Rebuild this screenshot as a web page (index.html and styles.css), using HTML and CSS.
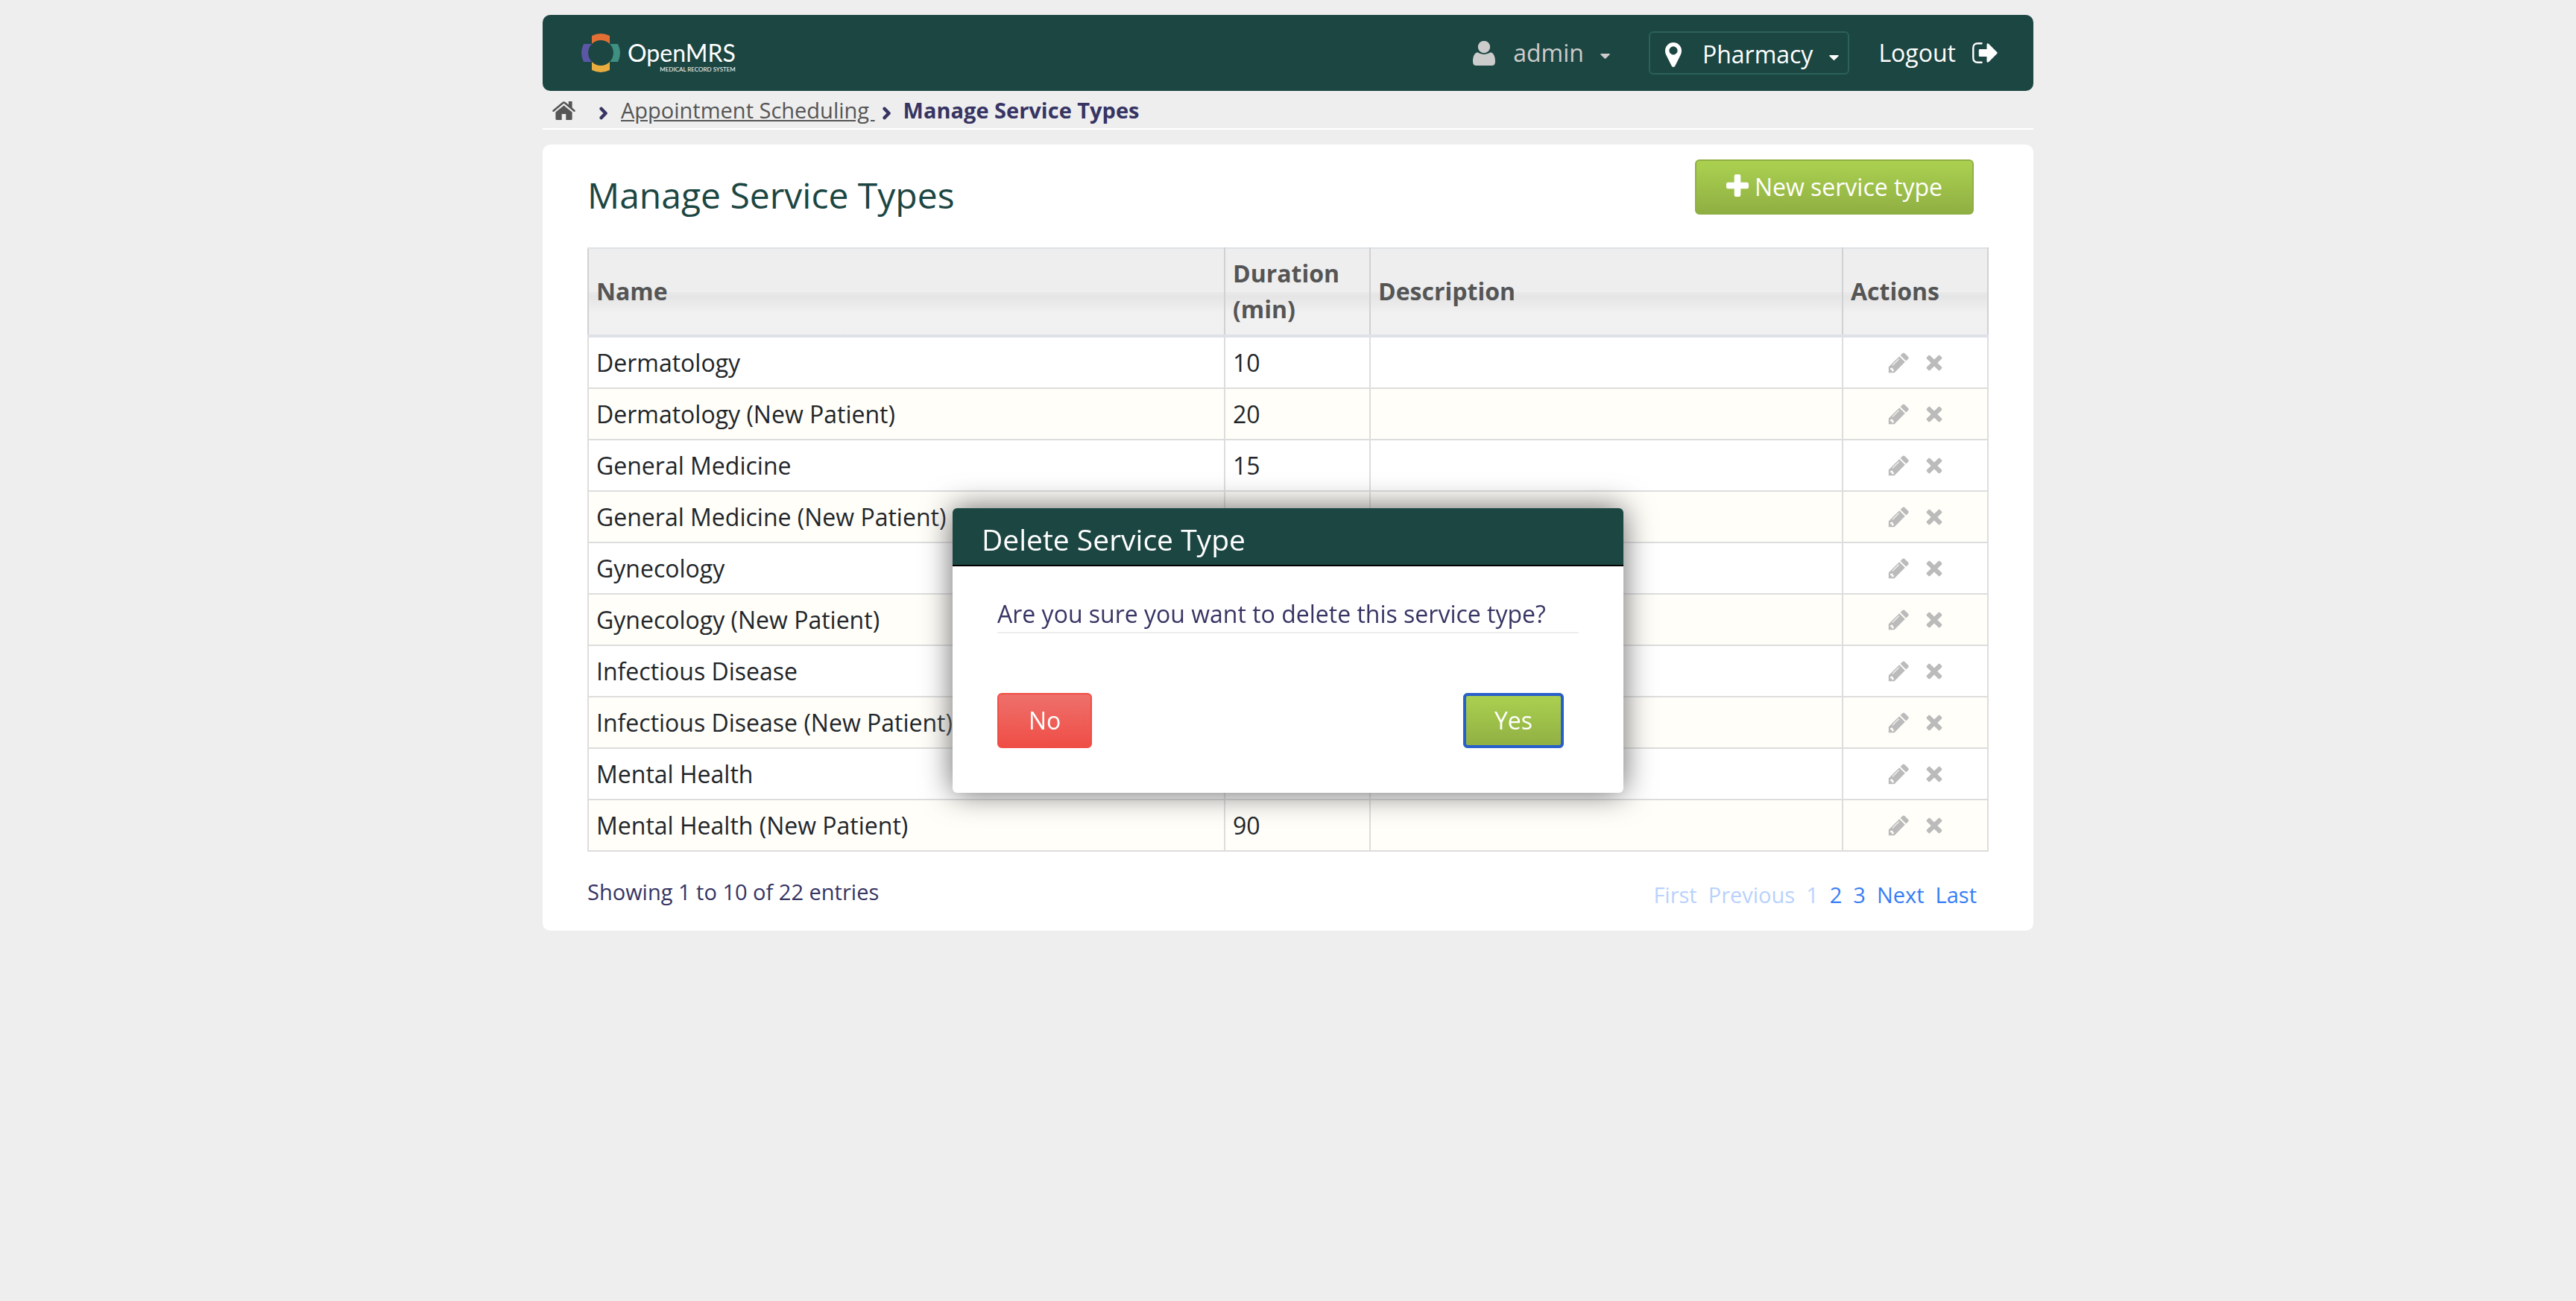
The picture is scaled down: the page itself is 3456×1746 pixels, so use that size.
FILE: index.html
```html
<!DOCTYPE html>
<html lang="en">
<head>
<meta charset="utf-8">
<meta name="viewport" content="width=device-width, initial-scale=1">
<title>Manage Service Types</title>
<link rel="stylesheet" href="styles.css">
</head>
<body>
<svg class="symbols" aria-hidden="true">
  <symbol id="caret" viewBox="0 0 13 7"><path d="M.8 0H12.200Q13.200.6 12.400 1.400L7.300 6.600Q6.500 7.200 5.700 6.600L.6 1.400Q-.2.6.8 0Z"/></symbol>
  <symbol id="chevron" viewBox="0 0 12 18"><path d="M2.700 3 8.500 9 2.700 15" fill="none" stroke="currentColor" stroke-width="4.600" stroke-linejoin="round" stroke-linecap="round"/></symbol>
  <symbol id="pencil" viewBox="0 0 28 28">
    <path fill-rule="evenodd" d="M15.200 5.200 22.800 12.800 8.500 27.200H.8V19.500ZM14.300 8.200 5.600 16.900 6.400 17.700 15.100 9ZM3.200 21.200 2.800 22.800 4.800 23.600 5.400 25.500 7.600 25 8.100 23.400 6.600 22.900 6.500 21 4.800 20.600Z"/>
    <path d="M16.600 3.900 19.400 1.100Q20.800-.2 22.300 1L27.100 5.800Q28.300 7.200 27.100 8.700L24.200 11.500Z"/>
  </symbol>
  <symbol id="remove" viewBox="0 0 22 22"><path d="M5.300.9Q4.300.2 3.400 1L.9 3.500Q.2 4.500 1 5.400L6.700 11 1 16.600Q.2 17.500.9 18.500L3.400 21Q4.300 21.800 5.300 21.100L11 15.400 16.700 21.100Q17.700 21.800 18.600 21L21.100 18.500Q21.800 17.500 21 16.600L15.300 11 21 5.400Q21.800 4.500 21.100 3.500L18.600 1Q17.700.2 16.700.9L11 6.600Z"/></symbol>
</svg>

<div class="page">
  <header class="topbar">
    <a class="logo" href="#" aria-label="OpenMRS home">
      <svg class="logo-mark" viewBox="0 0 52 52" aria-hidden="true">
        <path fill="#e36f35" d="M14 3Q26-3 38 3V14A17 17 0 0 0 14 14Z"/>
        <path fill="#5b57a6" d="M3 14Q-3 26 3 38H14A17 17 0 0 1 14 14Z"/>
        <path fill="#3f9080" d="M49 14Q55 26 49 38H38A17 17 0 0 0 38 14Z"/>
        <path fill="#e9ad3f" d="M14 49Q26 55 38 49V38A17 17 0 0 1 14 38Z"/>
      </svg>
      <span class="wordmark"><span class="wordmark-name">OpenMRS</span><span class="wordmark-tag">MEDICAL RECORD SYSTEM</span></span>
    </a>
    <nav class="user-nav" aria-label="User">
      <button class="account" type="button">
        <svg class="icon-user" viewBox="0 0 30 33" aria-hidden="true"><circle cx="15" cy="8" r="8.200"/><path d="M6.200 15.300Q15 20.700 23.800 15.300C28 16 30 21 30 27.500Q30 33 25.500 33H4.500Q0 33 0 27.500C0 21 2 16 6.200 15.300Z"/></svg>
        <span>admin</span>
        <svg class="icon-caret" aria-hidden="true"><use href="#caret"/></svg>
      </button>
      <button class="location" type="button">
        <svg class="icon-pin" viewBox="0 0 22 33" aria-hidden="true"><path fill-rule="evenodd" d="M11 0A11 11 0 0 1 22 11C22 13.500 21.500 15 20.700 16.700L13.300 31.500Q11 34.500 8.700 31.500L1.300 16.700C.5 15 0 13.500 0 11A11 11 0 0 1 11 0ZM11 5.300A5.600 5.600 0 0 0 11 16.500 5.600 5.600 0 0 0 11 5.300Z"/></svg>
        <span>Pharmacy</span>
        <svg class="icon-caret" aria-hidden="true"><use href="#caret"/></svg>
      </button>
      <a class="logout" href="#">
        <span>Logout</span>
        <svg class="icon-logout" viewBox="0 0 34 28" aria-hidden="true"><path d="M13.500 1.200H7.500Q1.300 1.200 1.300 7.400V20.600Q1.300 26.800 7.500 26.800H13.500" fill="none" stroke="currentColor" stroke-width="2.400"/><path d="M10 9H19.500V2.600Q20 .4 22 1.700L33.200 12.900Q34.300 14 33.200 15.100L22 26.300Q20 27.600 19.500 25.400V19H10Q8.800 19 8.800 17.800V10.200Q8.800 9 10 9Z"/></svg>
      </a>
    </nav>
  </header>

  <nav class="breadcrumbs" aria-label="Breadcrumb">
    <a class="home" href="#" aria-label="Home">
      <svg class="icon-home" viewBox="0 0 31 25" aria-hidden="true"><path d="M1.500 12.700 14.300 2Q15.500 1.200 16.700 2L29.500 12.700" fill="none" stroke="currentColor" stroke-width="2.600" stroke-linecap="round"/><path d="M21.800 0H26.600V10L21.800 6ZM15.500 5.500 26.600 14.600V23.500Q26.600 25 25.100 25H18.300V17H12.700V25H6Q4.400 25 4.400 23.500V14.600Z"/></svg>
    </a>
    <svg class="icon-chevron" aria-hidden="true"><use href="#chevron"/></svg>
    <a class="crumb" href="#">Appointment Scheduling </a>
    <svg class="icon-chevron" aria-hidden="true"><use href="#chevron"/></svg>
    <strong>Manage Service Types</strong>
  </nav>

  <main class="content">
    <div class="title-row">
      <h1>Manage Service Types</h1>
      <button class="btn confirm" type="button"><svg class="icon-plus" viewBox="0 0 30 30" aria-hidden="true"><path d="M13 0H17Q19.300 0 19.300 2.300V10.700H27.700Q30 10.700 30 13V17Q30 19.300 27.700 19.300H19.300V27.700Q19.300 30 17 30H13Q10.700 30 10.700 27.700V19.300H2.300Q0 19.300 0 17V13Q0 10.700 2.300 10.700H10.700V2.300Q10.700 0 13 0Z"/></svg>New service type</button>
    </div>

    <table class="services">
      <colgroup><col><col class="col-duration"><col class="col-description"><col class="col-actions"></colgroup>
      <thead>
        <tr><th scope="col">Name</th><th scope="col">Duration (min)</th><th scope="col">Description</th><th scope="col">Actions</th></tr>
      </thead>
      <tbody>
        <tr><td>Dermatology</td><td>10</td><td></td><td><div class="actions"><button type="button" aria-label="Edit"><svg class="icon-pencil"><use href="#pencil"/></svg></button><button type="button" aria-label="Delete"><svg class="icon-remove"><use href="#remove"/></svg></button></div></td></tr>
        <tr><td>Dermatology (New Patient)</td><td>20</td><td></td><td><div class="actions"><button type="button" aria-label="Edit"><svg class="icon-pencil"><use href="#pencil"/></svg></button><button type="button" aria-label="Delete"><svg class="icon-remove"><use href="#remove"/></svg></button></div></td></tr>
        <tr><td>General Medicine</td><td>15</td><td></td><td><div class="actions"><button type="button" aria-label="Edit"><svg class="icon-pencil"><use href="#pencil"/></svg></button><button type="button" aria-label="Delete"><svg class="icon-remove"><use href="#remove"/></svg></button></div></td></tr>
        <tr><td>General Medicine (New Patient)</td><td></td><td></td><td><div class="actions"><button type="button" aria-label="Edit"><svg class="icon-pencil"><use href="#pencil"/></svg></button><button type="button" aria-label="Delete"><svg class="icon-remove"><use href="#remove"/></svg></button></div></td></tr>
        <tr><td>Gynecology</td><td></td><td></td><td><div class="actions"><button type="button" aria-label="Edit"><svg class="icon-pencil"><use href="#pencil"/></svg></button><button type="button" aria-label="Delete"><svg class="icon-remove"><use href="#remove"/></svg></button></div></td></tr>
        <tr><td>Gynecology (New Patient)</td><td></td><td></td><td><div class="actions"><button type="button" aria-label="Edit"><svg class="icon-pencil"><use href="#pencil"/></svg></button><button type="button" aria-label="Delete"><svg class="icon-remove"><use href="#remove"/></svg></button></div></td></tr>
        <tr><td>Infectious Disease</td><td></td><td></td><td><div class="actions"><button type="button" aria-label="Edit"><svg class="icon-pencil"><use href="#pencil"/></svg></button><button type="button" aria-label="Delete"><svg class="icon-remove"><use href="#remove"/></svg></button></div></td></tr>
        <tr><td>Infectious Disease (New Patient)</td><td></td><td></td><td><div class="actions"><button type="button" aria-label="Edit"><svg class="icon-pencil"><use href="#pencil"/></svg></button><button type="button" aria-label="Delete"><svg class="icon-remove"><use href="#remove"/></svg></button></div></td></tr>
        <tr><td>Mental Health</td><td></td><td></td><td><div class="actions"><button type="button" aria-label="Edit"><svg class="icon-pencil"><use href="#pencil"/></svg></button><button type="button" aria-label="Delete"><svg class="icon-remove"><use href="#remove"/></svg></button></div></td></tr>
        <tr><td>Mental Health (New Patient)</td><td>90</td><td></td><td><div class="actions"><button type="button" aria-label="Edit"><svg class="icon-pencil"><use href="#pencil"/></svg></button><button type="button" aria-label="Delete"><svg class="icon-remove"><use href="#remove"/></svg></button></div></td></tr>
      </tbody>
    </table>

    <div class="table-footer">
      <p>Showing 1 to 10 of 22 entries</p>
      <nav class="pagination" aria-label="Pages">
        <a class="disabled" href="#">First</a>
        <a class="disabled" href="#">Previous</a>
        <a class="disabled" href="#" aria-current="page">1</a>
        <a href="#">2</a>
        <a href="#">3</a>
        <a href="#">Next</a>
        <a href="#">Last</a>
      </nav>
    </div>
  </main>
</div>

<div class="overlay">
  <div class="dialog" role="dialog" aria-modal="true" aria-labelledby="dialog-title">
    <h2 id="dialog-title">Delete Service Type</h2>
    <div class="dialog-body">
      <p>Are you sure you want to delete this service type?</p>
      <div class="dialog-actions">
        <button class="btn cancel" type="button">No</button>
        <button class="btn confirm focused" type="button">Yes</button>
      </div>
    </div>
  </div>
</div>
</body>
</html>
```
FILE: styles.css
```css
* { box-sizing: border-box; }

body {
  margin: 0;
  background: #eee;
  color: #363463;
  font: 32px/48px "Open Sans", sans-serif;
}

h1, h2, p { margin: 0; font-weight: 400; }
button { font: inherit; cursor: pointer; }
a { color: inherit; text-decoration: none; }
svg { display: block; flex: none; fill: currentColor; }

.symbols { position: absolute; width: 0; height: 0; }

.page {
  max-width: 2000px;
  margin: 0 auto;
  padding: 20px 0;
}

/* Top bar */
.topbar {
  display: flex;
  justify-content: space-between;
  align-items: center;
  min-height: 102px;
  padding: 0 48px 0 52px;
  border-radius: 10px;
  background: #1c4642;
  color: #fff;
}

.logo { display: flex; align-items: center; gap: 10px; }
.logo-mark { width: 52px; height: 52px; }

.wordmark {
  display: flex;
  flex-direction: column;
  padding-top: 10px;
  font-family: Lato, sans-serif;
}
.wordmark-name { font-size: 32px; line-height: 34px; }
.wordmark-tag { font-size: 8px; line-height: 10px; text-align: right; }

.user-nav { display: flex; align-items: center; }
.user-nav button { border: 0; background: none; color: inherit; }

.account,
.location,
.logout { display: flex; align-items: center; }

.user-nav .account { gap: 22px; padding: 0; margin-right: 52px; color: #ccc; }
.icon-user { width: 30px; height: 33px; }
.account .icon-user { margin-right: 2px; }
.icon-caret { width: 13px; height: 7px; margin-top: 8px; }

.user-nav .location {
  height: 58px;
  padding: 4px 12px 0 20px;
  gap: 22px;
  margin-right: 39px;
  border: 2px solid #2a615a;
  border-radius: 6px;
}
.icon-pin { width: 22px; height: 33px; margin-right: 6px; }

.logout { gap: 22px; }
.icon-logout { width: 34px; height: 28px; }

/* Breadcrumbs */
.breadcrumbs {
  display: flex;
  align-items: center;
  padding: 2px 13px 0;
  border-bottom: 2px solid #fff;
  font-size: 29px;
}
.home { margin-right: 32px; color: #555; }
.icon-home { width: 31px; height: 25px; }
.icon-chevron { width: 12px; height: 18px; margin-top: 8px; }
.crumb {
  margin: 0 10px 0 17px;
  color: #555;
  text-decoration: underline;
  white-space: pre;
}
.breadcrumbs strong { margin-left: 16px; }

/* Content card */
.content {
  margin-top: 20px;
  padding: 20px 60px 24px;
  border-radius: 10px;
  background: #fff;
}

.title-row {
  display: flex;
  justify-content: space-between;
  align-items: flex-start;
  padding-right: 20px;
  margin-bottom: 32px;
}
h1 {
  padding-top: 10px;
  color: #1c4642;
  font-size: 48px;
  line-height: 76px;
}

.btn {
  display: flex;
  align-items: center;
  gap: 8px;
  padding: 11px 40px;
  border: 2px solid;
  border-radius: 6px;
  color: #fff;
}
.confirm {
  border-color: #90af43;
  background: linear-gradient(#abd150, #90af43);
}
.cancel {
  border-color: #ef4e46;
  background: linear-gradient(#ee706b, #ef4e46);
}
.focused {
  outline: 4px solid #285fca;
  outline-offset: -4px;
}
.icon-plus { width: 30px; height: 30px; margin-bottom: 4px; }

/* Service type table */
.services {
  width: 100%;
  table-layout: fixed;
  border-collapse: collapse;
  color: #212529;
  line-height: 47px;
}
.col-duration, .col-actions { width: 195px; }
.col-description { width: 634px; }

.services th,
.services td {
  padding: 10px;
  border: 2px solid #ddd;
}
.services th {
  padding: 9px 10px 10px;
  border: 2px solid #d0d1d3;
  border-top-color: #dee2e6;
  border-bottom: 4px solid #dfe1e8;
  background: linear-gradient(#eee, #eee 50%, #e9e9e9 50%, #e5e5e5 56%, #f1f1f1 75%, #f0f0f0);
  color: #555;
  line-height: 48px;
  text-align: left;
}
.services tbody tr:nth-child(even) { background: #fffef9; }

.actions { display: flex; justify-content: center; align-items: center; gap: 23px; height: 47px; }
.actions button { padding: 0; border: 0; background: none; color: #bbb; }
.icon-pencil { width: 28px; height: 28px; }
.icon-remove { width: 22px; height: 22px; }

.table-footer {
  display: flex;
  justify-content: space-between;
  padding: 30px 16px 0 0;
  font-size: 29px;
}
.pagination { display: flex; gap: 15px; padding-top: 4px; }
.pagination a { color: #377df6; }
.pagination .disabled { color: #b9d2fc; }

/* Confirmation dialog */
.overlay {
  position: fixed;
  inset: 0;
  display: flex;
  justify-content: center;
  align-items: center;
}
.dialog {
  width: 900px;
  border-radius: 6px;
  background: #fff;
  box-shadow: 0 0 40px #666;
}
h2 {
  padding: 16px 39px 8px;
  border-bottom: 2px solid #000;
  border-radius: 6px 6px 0 0;
  background: #1c4642;
  color: #fff;
  font-size: 39px;
  line-height: 52px;
}
.dialog-body { padding: 40px 60px 60px; }
.dialog-body p { border-bottom: 2px solid #eee; }
.dialog-actions {
  display: flex;
  justify-content: space-between;
  padding: 80px 20px 0 0;
}
```
